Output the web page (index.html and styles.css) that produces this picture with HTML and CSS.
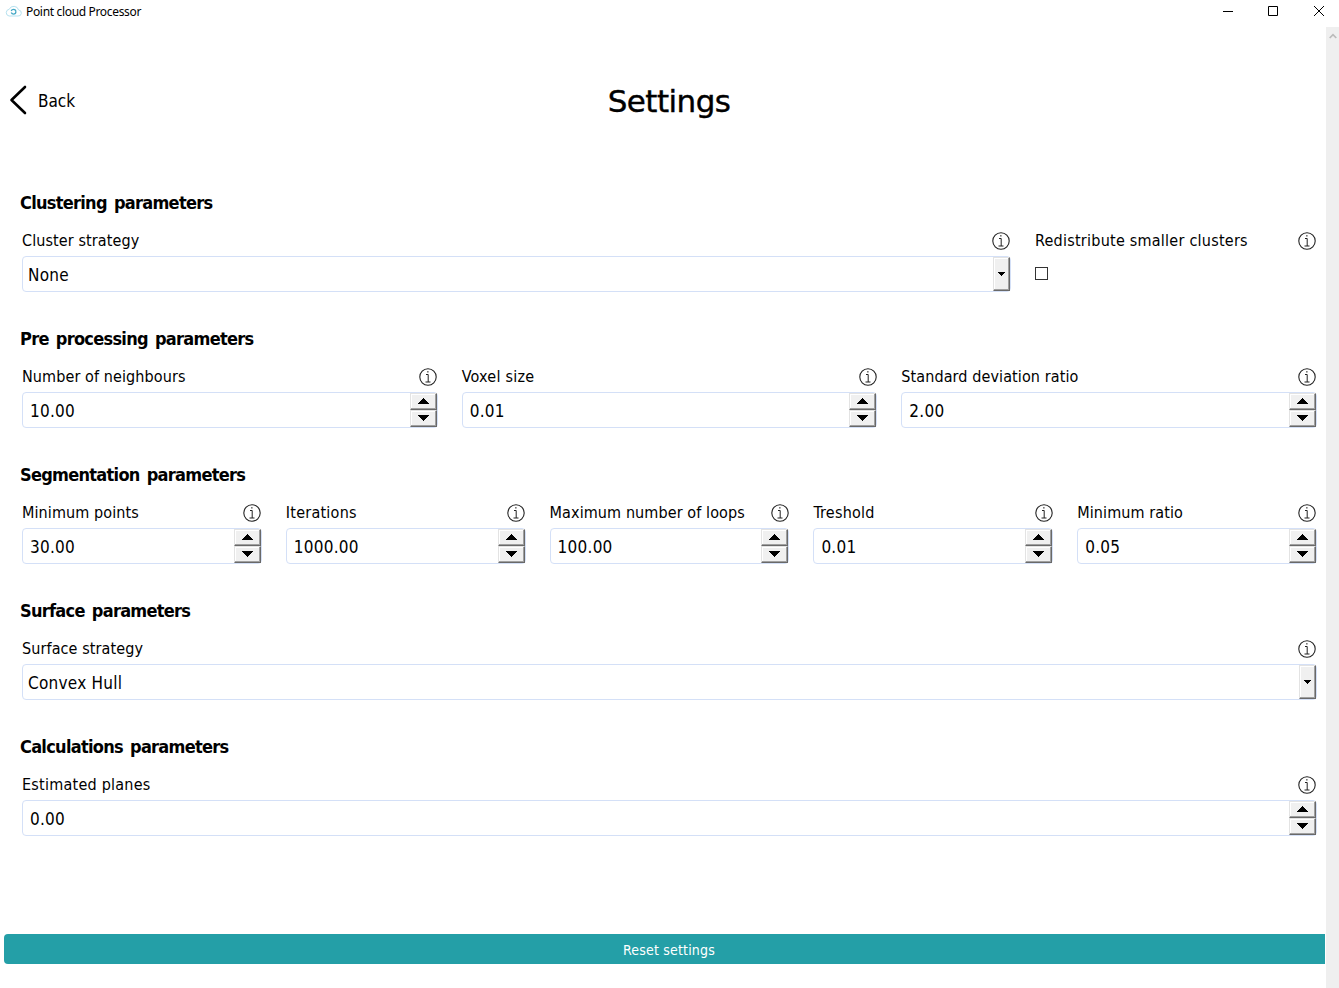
FILE: index.html
```html
<!DOCTYPE html>
<html lang="en">
<head>
<meta charset="utf-8">
<title>Point cloud Processor</title>
<link rel="stylesheet" href="styles.css">
</head>
<body>
<svg class="defs" width="0" height="0">
  <symbol id="info" viewBox="0 0 18 18"><circle cx="9" cy="9" r="8.200" fill="none" stroke="#222" stroke-width="1.100"/><path d="M8.900 3v1.600M7 6.500h2.200V14M6.500 14h5" fill="none" stroke="#222" stroke-width="1"/></symbol>
  <symbol id="up" viewBox="0 0 11 6"><path d="M5 0h1v1h1v1h1v1h1v1h1v1h1v1H0V5h1V4h1V3h1V2h1V1h1z"/></symbol>
  <symbol id="down" viewBox="0 0 11 6"><path d="M5 6h1V5h1V4h1V3h1V2h1V1h1V0H0v1h1v1h1v1h1v1h1v1h1z"/></symbol>
</svg>
<header class="titlebar">
  <svg class="logo" width="17" height="12" viewBox="0 0 17 12" fill="none"><path d="M4 11h9a3 3 0 0 0 .6-6A5 5 0 0 0 4.200 4.300 3.400 3.400 0 0 0 4 11z" stroke="#b5e1ef"/><circle cx="8.500" cy="6.700" r="2.400" stroke="#45a9c6" stroke-width="1.300" stroke-dasharray="6 1.500"/></svg>
  <span class="app-name">Point cloud Processor</span>
  <svg class="controls" width="102" height="12" viewBox="0 0 102 12" fill="none" stroke="#000"><path d="M0 6.500h10M45.500 1.500h9v9h-9zM91 1l10 10M101 1L91 11"/></svg>
</header>
<div class="window">
<main>
  <div class="page-head">
    <div class="back"><svg width="18" height="30" viewBox="0 0 18 30"><path d="M16 2L2.500 15 16 28" fill="none" stroke="#000" stroke-width="2.600" stroke-linecap="round" stroke-linejoin="round"/></svg><span>Back</span></div>
    <h1>Settings</h1>
  </div>
  <section>
    <h2>Clustering parameters</h2>
    <div class="row cluster">
      <div class="field"><div class="label"><span>Cluster strategy</span><svg class="info"><use href="#info"/></svg></div><div class="select"><span>None</span><i><svg width="7" height="4" viewBox="0 0 7 4"><path d="M0 0h7v1H6v1H5v1H4v1H3V3H2V2H1V1H0z"/></svg></i></div></div>
      <div class="field"><div class="label wide"><span>Redistribute smaller clusters</span><svg class="info"><use href="#info"/></svg></div><div class="check"></div></div>
    </div>
  </section>
  <section>
    <h2>Pre processing parameters</h2>
    <div class="row">
      <div class="field"><div class="label"><span>Number of neighbours</span><svg class="info"><use href="#info"/></svg></div><div class="spin"><span>10.00</span><i><b><svg><use href="#up"/></svg></b><b><svg><use href="#down"/></svg></b></i></div></div>
      <div class="field"><div class="label wide"><span>Voxel size</span><svg class="info"><use href="#info"/></svg></div><div class="spin"><span>0.01</span><i><b><svg><use href="#up"/></svg></b><b><svg><use href="#down"/></svg></b></i></div></div>
      <div class="field"><div class="label"><span>Standard deviation ratio</span><svg class="info"><use href="#info"/></svg></div><div class="spin"><span>2.00</span><i><b><svg><use href="#up"/></svg></b><b><svg><use href="#down"/></svg></b></i></div></div>
    </div>
  </section>
  <section>
    <h2>Segmentation parameters</h2>
    <div class="row">
      <div class="field"><div class="label"><span>Minimum points</span><svg class="info"><use href="#info"/></svg></div><div class="spin"><span>30.00</span><i><b><svg><use href="#up"/></svg></b><b><svg><use href="#down"/></svg></b></i></div></div>
      <div class="field"><div class="label wide"><span>Iterations</span><svg class="info"><use href="#info"/></svg></div><div class="spin"><span>1000.00</span><i><b><svg><use href="#up"/></svg></b><b><svg><use href="#down"/></svg></b></i></div></div>
      <div class="field"><div class="label"><span>Maximum number of loops</span><svg class="info"><use href="#info"/></svg></div><div class="spin"><span>100.00</span><i><b><svg><use href="#up"/></svg></b><b><svg><use href="#down"/></svg></b></i></div></div>
      <div class="field"><div class="label wide"><span>Treshold</span><svg class="info"><use href="#info"/></svg></div><div class="spin"><span>0.01</span><i><b><svg><use href="#up"/></svg></b><b><svg><use href="#down"/></svg></b></i></div></div>
      <div class="field"><div class="label"><span>Minimum ratio</span><svg class="info"><use href="#info"/></svg></div><div class="spin"><span>0.05</span><i><b><svg><use href="#up"/></svg></b><b><svg><use href="#down"/></svg></b></i></div></div>
    </div>
  </section>
  <section>
    <h2>Surface parameters</h2>
    <div class="row">
      <div class="field"><div class="label"><span>Surface strategy</span><svg class="info"><use href="#info"/></svg></div><div class="select"><span>Convex Hull</span><i><svg width="7" height="4" viewBox="0 0 7 4"><path d="M0 0h7v1H6v1H5v1H4v1H3V3H2V2H1V1H0z"/></svg></i></div></div>
    </div>
  </section>
  <section>
    <h2>Calculations parameters</h2>
    <div class="row">
      <div class="field"><div class="label wide"><span>Estimated planes</span><svg class="info"><use href="#info"/></svg></div><div class="spin"><span>0.00</span><i><b><svg><use href="#up"/></svg></b><b><svg><use href="#down"/></svg></b></i></div></div>
    </div>
  </section>
  <div class="reset">Reset settings</div>
</main>
<aside class="scrollbar"><svg width="8" height="6" viewBox="0 0 8 6"><path d="M.7 5L4 1.700 7.300 5" fill="none" stroke="#bbb" stroke-width="1.700"/></svg></aside>
</div>
</body>
</html>
```
FILE: styles.css
```css
* { box-sizing: border-box; }
body {
  margin: 0;
  height: 988px;
  overflow: hidden;
  background: #fff;
  color: #000;
  font-family: "DejaVu Sans Condensed", "DejaVu Sans", sans-serif;
  font-stretch: condensed;
  display: flex;
  flex-direction: column;
}
.defs { position: absolute; }
svg { display: block; flex: none; }
span { white-space: nowrap; }
.titlebar { height: 27px; flex: none; display: flex; align-items: flex-start; padding: 5px 14px 0 5px; }
.app-name { font: 12px/15px "Noto Sans", sans-serif; letter-spacing: -0.33px; margin: -1px 0 0 4px; }
.controls { margin-left: auto; }
.window { flex: 1; display: flex; min-height: 0; }
main { width: 1326px; }
.scrollbar { flex: 1; background: #efefef; padding: 6px 0 0 3px; }
.page-head { height: 148px; display: grid; grid-template-columns: 1fr auto 1fr; padding: 0 0 0 12px; }
.back { display: flex; align-items: center; height: 30px; margin: 58px 0 0 -3px; font-size: 17px; }
.back span { margin-left: 11px; padding-top: 2px; }
h1 { margin: 54px 0 0; font-family: "DejaVu Sans", sans-serif; font-stretch: normal; font-size: 31px; line-height: 40px; font-weight: 400; letter-spacing: -0.55px; -webkit-text-stroke: 0.4px #000; }
section { height: 136px; padding: 0 9px 0 22px; }
h2 { margin: 0 0 0 -2px; padding-top: 16px; height: 54px; font-size: 18px; line-height: 24px; font-weight: 700; letter-spacing: -0.72px; word-spacing: 2.2px; }
.row { display: grid; grid-auto-flow: column; grid-auto-columns: 1fr; gap: 24px; }
.cluster { grid-template-columns: 989px 282px; }
.label { height: 27px; display: flex; justify-content: space-between; align-items: flex-start; font-size: 16px; line-height: 24px; letter-spacing: 0.1px; }
.label.wide { letter-spacing: 0.24px; }
.info { width: 18px; height: 18px; margin: 2.500px 0.700px 0 0; }
.select, .spin { height: 36px; border: 1px solid #d4e0f7; border-radius: 4px; display: flex; justify-content: space-between; align-items: center; font-size: 17px; letter-spacing: 0.25px; padding-left: 5px; }
.select span, .spin span { padding-top: 2px; }
.spin { padding-left: 7px; }
.select i, .spin b { background: #f0f0f0; border: 1px solid; border-color: #e3e3e3 #696969 #696969 #e3e3e3; box-shadow: inset -1px -1px #a0a0a0, inset 1px 1px #fff; display: flex; align-items: center; justify-content: center; }
.select i { width: 17px; height: 34px; }
.spin i { width: 27px; height: 34px; display: flex; flex-direction: column; }
.spin b { height: 17px; padding-bottom: 1px; }
.spin b svg { width: 11px; height: 6px; }
.check { width: 13px; height: 13px; margin-top: 11px; border: 1px solid #333; }
.reset { margin: 79px 1px 0 4px; padding-left: 9px; height: 30px; border-radius: 4px 0 0 4px; background: #249fa7; color: #fff; font-size: 14px; line-height: 32px; text-align: center; letter-spacing: 0.18px; }
```
